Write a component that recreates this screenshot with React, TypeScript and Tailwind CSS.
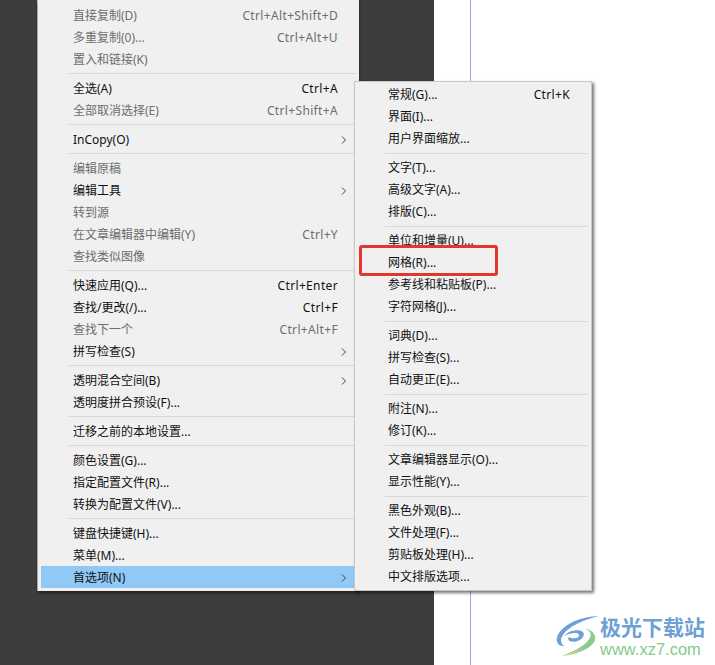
import React from "react";

type Row = { label?: string; shortcut?: string; off?: boolean; arrow?: boolean; active?: boolean; sep?: boolean };

const mainMenu: Row[] = [
  { label: "直接复制(D)", shortcut: "Ctrl+Alt+Shift+D", off: true },
  { label: "多重复制(0)...", shortcut: "Ctrl+Alt+U", off: true },
  { label: "置入和链接(K)", off: true },
  { sep: true },
  { label: "全选(A)", shortcut: "Ctrl+A" },
  { label: "全部取消选择(E)", shortcut: "Ctrl+Shift+A", off: true },
  { sep: true },
  { label: "InCopy(O)", arrow: true },
  { sep: true },
  { label: "编辑原稿", off: true },
  { label: "编辑工具", arrow: true },
  { label: "转到源", off: true },
  { label: "在文章编辑器中编辑(Y)", shortcut: "Ctrl+Y", off: true },
  { label: "查找类似图像", off: true },
  { sep: true },
  { label: "快速应用(Q)...", shortcut: "Ctrl+Enter" },
  { label: "查找/更改(/)...", shortcut: "Ctrl+F" },
  { label: "查找下一个", shortcut: "Ctrl+Alt+F", off: true },
  { label: "拼写检查(S)", arrow: true },
  { sep: true },
  { label: "透明混合空间(B)", arrow: true },
  { label: "透明度拼合预设(F)..." },
  { sep: true },
  { label: "迁移之前的本地设置..." },
  { sep: true },
  { label: "颜色设置(G)..." },
  { label: "指定配置文件(R)..." },
  { label: "转换为配置文件(V)..." },
  { sep: true },
  { label: "键盘快捷键(H)..." },
  { label: "菜单(M)..." },
  { label: "首选项(N)", arrow: true, active: true },
];

const subMenu: Row[] = [
  { label: "常规(G)...", shortcut: "Ctrl+K" },
  { label: "界面(I)..." },
  { label: "用户界面缩放..." },
  { sep: true },
  { label: "文字(T)..." },
  { label: "高级文字(A)..." },
  { label: "排版(C)..." },
  { sep: true },
  { label: "单位和增量(U)..." },
  { label: "网格(R)..." },
  { label: "参考线和粘贴板(P)..." },
  { label: "字符网格(J)..." },
  { sep: true },
  { label: "词典(D)..." },
  { label: "拼写检查(S)..." },
  { label: "自动更正(E)..." },
  { sep: true },
  { label: "附注(N)..." },
  { label: "修订(K)..." },
  { sep: true },
  { label: "文章编辑器显示(O)..." },
  { label: "显示性能(Y)..." },
  { sep: true },
  { label: "黑色外观(B)..." },
  { label: "文件处理(F)..." },
  { label: "剪贴板处理(H)..." },
  { label: "中文排版选项..." },
];

const MenuRow: React.FC<{ row: Row; sub?: boolean }> = ({ row, sub }) => {
  if (row.sep) {
    return (
      <div className={`h-[7px] flex items-center ${sub ? "pl-[30px] pr-[3px]" : "pl-[28px] pr-[3px]"}`}>
        <div className="h-px w-full bg-[#d7d7d7]" />
      </div>
    );
  }
  return (
    <div
      className={`h-[22px] flex items-center ${sub ? "pl-[33px] pr-[21px]" : "pl-[32px] pr-[21px] pt-[2px]"} ${
        row.active ? "bg-[#90c8f6]" : ""
      } ${row.off ? "text-[#6d6d6d]" : "text-[#111111]"}`}
    >
      <span className="flex-1 whitespace-nowrap">{row.label}</span>
      {row.shortcut && <span className="whitespace-nowrap tracking-[0.35px]">{row.shortcut}</span>}
      {row.arrow && (
        <svg width="6" height="8" viewBox="0 0 6 8" className="-mr-[9px]" fill="none" stroke="#444444" strokeWidth="1">
          <path d="M1 .5 4.5 4 1 7.5" />
        </svg>
      )}
    </div>
  );
};

const App: React.FC = () => {
  return (
    <div
      className="relative flex h-[665px] w-[715px] overflow-hidden text-[12px] leading-none"
      style={{ fontFamily: '"Noto Sans", "Noto Sans CJK SC", sans-serif' }}
    >
      <div className="h-full w-[434px] shrink-0 bg-[#3d3d3d] pl-[38px]">
        <div className="w-[321px] border-b-[3px] border-l-[3px] border-[#f0f0f0] bg-[#f0f0f0] pt-[4px] shadow-[0_2px_3px_rgba(0,0,0,0.5),-1px_0_0_#cfcfcf]">
          {mainMenu.map((row, i) => (
            <MenuRow key={i} row={row} />
          ))}
        </div>
      </div>

      <div className="h-full flex-1 bg-white pl-[36px]">
        <div className="h-full w-px bg-[#a9a5cc]" />
      </div>

      {/* flyout opened from the last item */}
      <div className="absolute left-[354px] top-[81px] h-[510px] w-[238px] border border-[#c8c8c8] bg-[#f0f0f0] pt-[2px] shadow-[2px_2px_3px_rgba(0,0,0,0.55)]">
        {subMenu.map((row, i) => (
          <MenuRow key={i} row={row} sub />
        ))}
      </div>

      {/* red annotation */}
      <div className="absolute left-[359px] top-[245px] h-[31px] w-[139px] rounded-[3px] border-[3px] border-[#e2382b]" />

      {/* watermark */}
      <div className="absolute left-[555px] top-[615px] flex items-start">
        <svg width="45" height="42" viewBox="0 0 48 44" fill="none">
          <path d="M46 1C30 1 10 8 3 21c-3 7 0 12 7 12-4-3-5-8-1-13C15 12 30 5 46 1Z" fill="#6f9fd8" />
          <path d="M10 22c4-6 16-8 20-4 3 4-3 10-10 10-6 0-7-3-5-5 2 2 8 2 10 0 2-3-1-5-6-4-3 0-6 1-9 3Z" fill="#6f9fd8" />
          <path d="M32 14c6 2 8 7 4 12-6 8-18 13-28 17 12-1 28-6 34-15 3-6-2-13-10-14Z" fill="#8cc98a" />
          <path d="M8 43c8-2 16-5 22-9-6 5-12 8-22 9Z" fill="#e4d96a" />
        </svg>
        <div className="flex flex-col">
          <span className="text-[21px] font-bold leading-[24px] text-[#6f9fd4] whitespace-nowrap">极光下载站</span>
          <span
            className="text-[16.5px] leading-[20px] text-[#86c98e] whitespace-nowrap"
            style={{ fontFamily: '"Liberation Sans", sans-serif' }}
          >
            www.xz7.com
          </span>
        </div>
      </div>
    </div>
  );
};

export default App;
